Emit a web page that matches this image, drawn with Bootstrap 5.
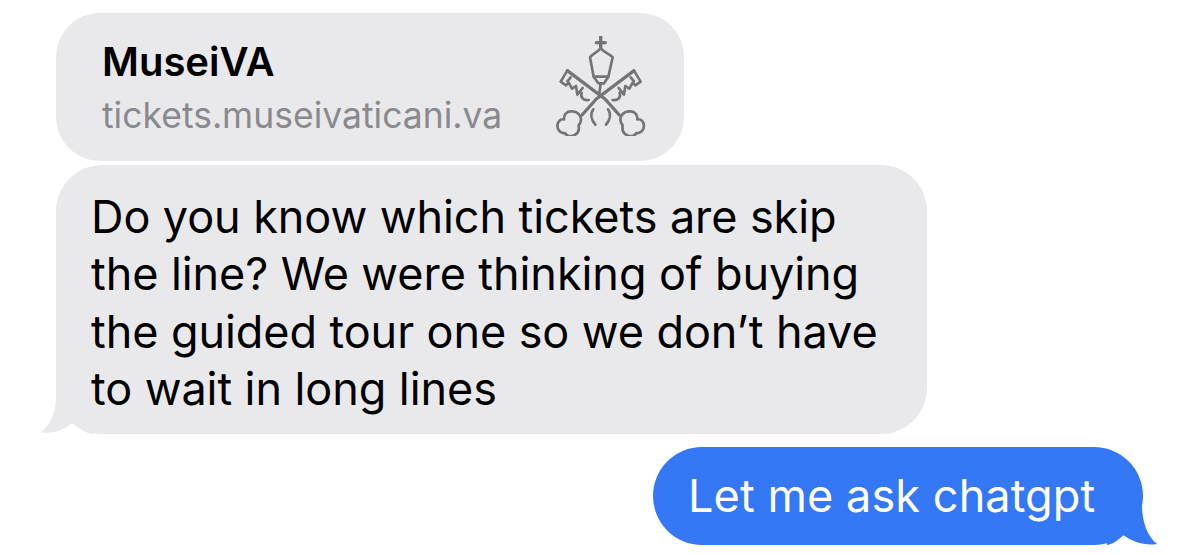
<!doctype html>
<html lang="en"><head><meta charset="utf-8"><title>Messages</title>
<link href="https://cdn.jsdelivr.net/npm/bootstrap@5.3.0/dist/css/bootstrap.min.css" rel="stylesheet">
<style>
html,body{background:#fff;height:555px;overflow:hidden}
body{font-family:Inter,"Liberation Sans",sans-serif;color:#000}
.thread{padding:13px 57px 0 56px;width:1200px}
.bub{position:relative;background:#e9e9eb}
.link-bub{width:628px;height:148px;border-radius:44px;padding:29px 36px 0 46px;margin-bottom:4px}
.link-title{font-size:40px;line-height:40px;font-weight:600}
.link-url{font-size:35.500px;line-height:40px;color:#8a8a8e;margin-top:14px;white-space:nowrap}
.msg-bub{width:871px;height:269px;border-radius:46px;padding:23px 30px 0 35px;font-size:45px;line-height:57.300px;letter-spacing:-.06px;word-spacing:-.1px;margin-bottom:13px}
.me-bub{background:#3478f6;color:#fff;width:490px;height:98px;border-radius:49px;padding:20px 0 0 35px;font-size:45px;line-height:57px;letter-spacing:.1px}
.tail{position:absolute;bottom:0}
.tail-l{left:-15px}
.tail-r{right:-14px}
.keys{width:98px;height:100px;margin-top:-6px}
</style></head>
<body>
<div class="thread d-flex flex-column">
  <div class="bub link-bub d-flex justify-content-between align-items-start">
    <div>
      <div class="link-title">MuseiVA</div>
      <div class="link-url">tickets.museivaticani.va</div>
    </div>
    <svg class="keys flex-shrink-0" viewBox="60 48 294 300" fill="none" stroke="#747477" stroke-width="8" stroke-linecap="round" stroke-linejoin="round">
      <path d="M212 50V85M199 68H226" stroke-width="10"/>
      <path d="M212 85C200 98 186 102 180 112L191 170H235L248 112C240 102 224 98 212 85Z"/>
      <path d="M191 170L205 190H222L235 170M212 190L207 228"/>
      <path d="M112 152L225 237L268 285" stroke-width="10"/>
      <path d="M112 152L92 185L108 196L116 188L126 206L138 198L142 224L158 204M122 172L112 184"/>
      <path d="M155 218C150 232 160 242 176 240M190 268C180 282 184 300 196 314"/>
      <path d="M150 288C140 268 100 268 102 298C78 294 72 340 106 340C112 356 152 350 146 316C152 308 156 298 150 288Z"/>
      <g transform="matrix(-1 0 0 1 424 0)">
        <path d="M112 152L225 237L268 285" stroke-width="10"/>
        <path d="M112 152L92 185L108 196L116 188L126 206L138 198L142 224L158 204M122 172L112 184"/>
        <path d="M155 218C150 232 160 242 176 240M190 268C180 282 184 300 196 314"/>
        <path d="M150 288C140 268 100 268 102 298C78 294 72 340 106 340C112 356 152 350 146 316C152 308 156 298 150 288Z"/>
      </g>
    </svg>
  </div>
  <div class="bub msg-bub">Do you know which tickets are skip<br>the line? We were thinking of buying<br>the guided tour one so we don’t have<br>to wait in long lines
    <svg class="tail tail-l" width="52" height="40" viewBox="0 0 52 40"><path d="M15 0C16 16 10 30 0 38.500C12 40 24 36 32 28C38 35 44 39 52 40V0Z" fill="#e9e9eb"/></svg>
  </div>
  <div class="bub me-bub align-self-end">Let me ask chatgpt
    <svg class="tail tail-r" width="50" height="40" viewBox="0 0 50 40"><path d="M35 0C35 16 40 31 50 39C38 41 26 37 16 30C12 35 6 39 0 40V0Z" fill="#3478f6"/></svg>
  </div>
</div>
</body></html>
